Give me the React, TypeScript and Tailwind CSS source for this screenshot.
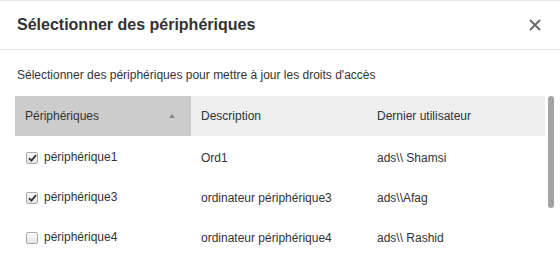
import { useState } from "react";

type Device = {
  name: string;
  description: string;
  user: string;
  checked: boolean;
};

const devices: Device[] = [
  { name: "périphérique1", description: "Ord1", user: "ads\\\\ Shamsi", checked: true },
  { name: "périphérique3", description: "ordinateur périphérique3", user: "ads\\\\Afag", checked: true },
  { name: "périphérique4", description: "ordinateur périphérique4", user: "ads\\\\ Rashid", checked: false },
];

function Checkbox({ checked, onToggle }: { checked: boolean; onToggle: () => void }) {
  return (
    <button
      onClick={onToggle}
      className="flex h-[12px] w-[12px] items-center justify-center rounded-[2px] border border-[#a9a9a9] bg-gradient-to-b from-[#fcfcfc] to-[#e4e4e4]"
    >
      {checked && (
        <svg width="9" height="8" viewBox="0 0 9 8">
          <path d="M1 4.2 L3.4 6.6 L8 1.2" fill="none" stroke="#3a3a3a" strokeWidth="1.9" />
        </svg>
      )}
    </button>
  );
}

export default function App() {
  const [rows, setRows] = useState(devices);

  return (
    <div className="h-[255px] w-[560px] overflow-hidden border-t border-[#e6e6e6] bg-white font-['Liberation_Sans',Arial,sans-serif] text-[#333]">
      <div className="flex h-[49px] items-center justify-between border-b border-[#e6e6e6] pr-[19px] pl-[17px]">
        <h2 className="text-[16px] font-bold text-[#333]">Sélectionner des périphériques</h2>
        <svg width="12" height="12" viewBox="0 0 12 12">
          <path d="M1 1 L11 11 M11 1 L1 11" stroke="#666" strokeWidth="1.8" />
        </svg>
      </div>
      <div className="pt-[17px] pl-[15px]">
        <p className="pl-[2px] text-[12px] leading-[16px]">
          Sélectionner des périphériques pour mettre à jour les droits d'accès
        </p>
        <div className="mt-[13px] flex">
          <div className="w-[530px] text-[12px]">
            <div className="flex h-[40px] items-center bg-[#eeeeee]">
              <div className="flex h-full w-[176px] items-center justify-between bg-[#cccccc] pr-[16px] pl-[10px]">
                <span>Périphériques</span>
                <svg width="6" height="4" viewBox="0 0 6 4">
                  <path d="M3 0 L6 4 L0 4 Z" fill="#888" />
                </svg>
              </div>
              <div className="w-[176px] pl-[10px]">Description</div>
              <div className="flex-1 pl-[10px]">Dernier utilisateur</div>
            </div>
            <div className="pt-[2px]">
              {rows.map((r, i) => (
                <div key={r.name} className="flex h-[40px] items-center">
                  <div className="flex w-[176px] items-center gap-[6px] pl-[11px]">
                    <Checkbox
                      checked={r.checked}
                      onToggle={() =>
                        setRows(rows.map((x, j) => (j === i ? { ...x, checked: !x.checked } : x)))
                      }
                    />
                    <span className="-mt-[2px]">{r.name}</span>
                  </div>
                  <div className="w-[176px] pl-[10px]">{r.description}</div>
                  <div className="flex-1 pl-[10px]">{r.user}</div>
                </div>
              ))}
            </div>
          </div>
          <div className="ml-[3px] h-[112px] w-[6px] rounded-full bg-[#a3a3a3]" />
        </div>
      </div>
    </div>
  );
}
